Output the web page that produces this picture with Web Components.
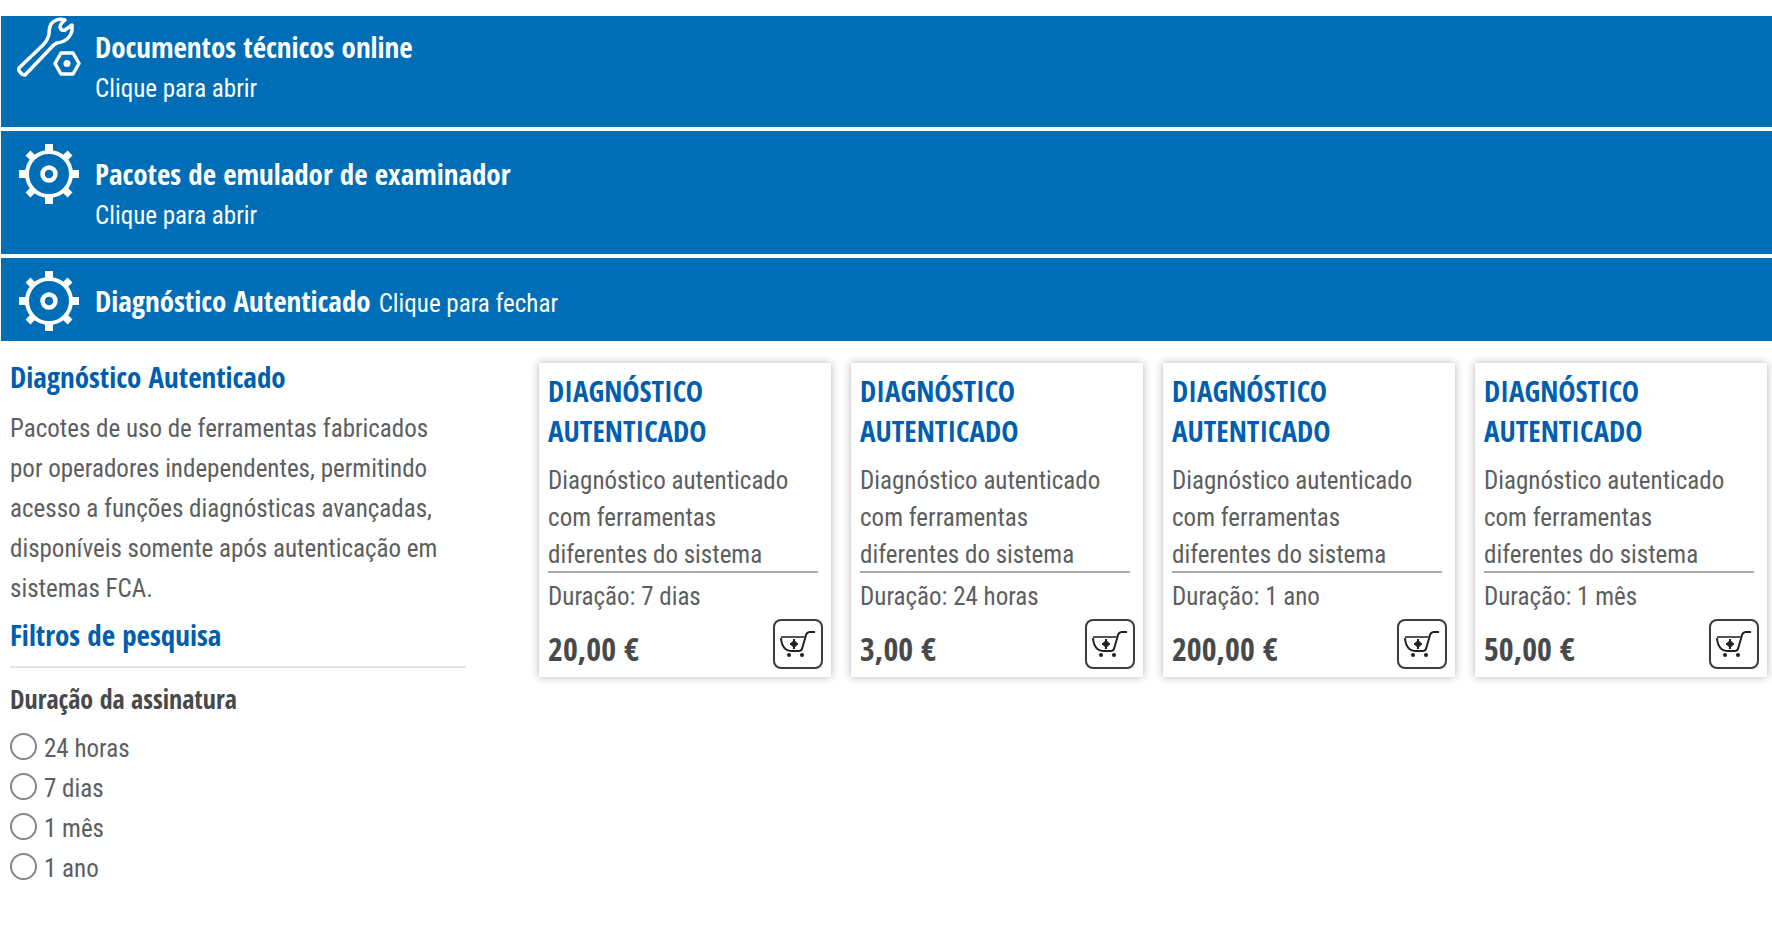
<!DOCTYPE html>
<html lang="pt">
<head>
  <meta charset="UTF-8">
  <meta name="viewport" content="width=device-width, initial-scale=1.0">
  <title>Diagnóstico Autenticado</title>
  <style>
  body {
    --blue: #006eb6;
    --link: #005eae;
    --bold: "Open Sans Condensed", "Roboto Condensed", "Open Sans", sans-serif;
    margin: 0;
    padding-top: 16px;
    background: #fff;
    color: #5c5e60;
    font: 25px/40px "Roboto Condensed", Roboto, sans-serif;
  }
  </style>
</head>
<body>
  <shop-page>
    <accordion-bar slot="bars" icon="wrench" heading="Documentos técnicos online" cropped>Clique para abrir</accordion-bar>
    <accordion-bar slot="bars" icon="gear" heading="Pacotes de emulador de examinador">Clique para abrir</accordion-bar>
    <accordion-bar slot="bars" icon="gear" heading="Diagnóstico Autenticado" open>Clique para fechar</accordion-bar>

    <filter-panel slot="side" heading="Diagnóstico Autenticado" options="24 horas|7 dias|1 mês|1 ano">
      Pacotes de uso de ferramentas fabricados por operadores independentes, permitindo acesso a funções diagnósticas avançadas, disponíveis somente após autenticação em sistemas FCA.
    </filter-panel>

    <product-card heading="Diagnóstico Autenticado" duration="7 dias" price="20,00 €">Diagnóstico autenticado com ferramentas diferentes do sistema</product-card>
    <product-card heading="Diagnóstico Autenticado" duration="24 horas" price="3,00 €">Diagnóstico autenticado com ferramentas diferentes do sistema</product-card>
    <product-card heading="Diagnóstico Autenticado" duration="1 ano" price="200,00 €">Diagnóstico autenticado com ferramentas diferentes do sistema</product-card>
    <product-card heading="Diagnóstico Autenticado" duration="1 mês" price="50,00 €">Diagnóstico autenticado com ferramentas diferentes do sistema</product-card>
  </shop-page>

  <script>
  const RESET = `* { margin: 0; padding: 0; box-sizing: border-box; }`;

  const ICONS = {
    wrench: `
      <svg viewBox="0 0 60 60" fill="none" stroke="#fff" stroke-width="3.5" stroke-linejoin="round" stroke-linecap="round">
        <path d="M0 51 L24 28 Q29 23 30 17 Q30 8 34 5 Q39 1 46 3 Q41 7 41 10 Q42 14 46 13 L53 8 Q54 15 50 20 Q46 25 38 26 Q35 27 30 33 L6 58 Q3 58 1 55 Q-1 53 0 51z"/>
        <path d="M42 36h12l6 10.500-6 10.500H42l-6-10.500z"/>
        <circle cx="48" cy="46.500" r="3.500" fill="#fff" stroke="none"/>
      </svg>`,
    gear: `
      <svg viewBox="0 0 60 60" fill="none" stroke="#fff">
        <circle cx="30" cy="30" r="22" stroke-width="4"/>
        <circle cx="30" cy="30" r="6.500" stroke-width="4.500"/>
        <path stroke-width="8" d="M30 0v8M30 52v8M0 30h8M52 30h8"/>
        <path stroke-width="7" d="M9 9l6 6M45 45l6 6M51 9l-6 6M15 45l-6 6"/>
      </svg>`,
    cart: `
      <svg viewBox="0 0 36 28" fill="none" stroke="#222" stroke-width="2" stroke-linejoin="round">
        <path d="M35 2h-5q-3 0-4 3l-4 14q-1 2-3 2h-7q-10 0-11-13"/>
        <path d="M1 7h24" stroke="#555"/>
        <path d="M14 9v10M10 14h8"/>
        <circle cx="14" cy="14" r="3" fill="#222" stroke="none"/>
        <circle cx="9" cy="25" r="2" fill="#222" stroke="none"/>
        <circle cx="22" cy="25" r="2" fill="#222" stroke="none"/>
      </svg>`
  };

  class ShopPage extends HTMLElement {
    constructor() {
      super();
      this.attachShadow({mode: "open"}).innerHTML = `
    <style>
      ${RESET}
      :host { display: block; }
      .bars {
        display: flex;
        flex-direction: column;
        gap: 4px;
        padding-left: 1px;
      }
      main {
        display: grid;
        grid-template-columns: 26fr 70fr;
        gap: 73px;
        padding: 16px 5px 16px 10px;
      }
      .cards {
        display: grid;
        grid-template-columns: repeat(4, 1fr);
        gap: 20px;
        align-items: start;
        padding-top: 6px;
      }
    </style>
    <div class="bars"><slot name="bars"></slot></div>
    <main>
      <slot name="side"></slot>
      <div class="cards"><slot></slot></div>
    </main>
  `;
    }
  }

  class AccordionBar extends HTMLElement {
    constructor() {
      super();
      this.attachShadow({mode: "open"});
      this.render();
    }

    render() {
      this.shadowRoot.innerHTML = `
    <style>
      ${RESET}
      :host { display: block; }
      button {
        display: flex;
        align-items: flex-start;
        gap: 16px;
        width: 100%;
        padding: 13px 18px 10px;
        border: 0;
        background: var(--blue);
        color: #fff;
        font: inherit;
        text-align: left;
        cursor: pointer;
      }
      :host([cropped]) button { padding-top: 1px; }
      .icon { flex: none; width: 60px; height: 60px; }
      svg { display: block; width: 100%; height: 100%; overflow: visible; }
      .text {
        display: flex;
        flex-direction: column;
        gap: 4px;
        padding: 12px 0 8px;
      }
      :host([open]) .text {
        flex-direction: row;
        align-items: baseline;
        gap: 8px;
        padding-bottom: 6px;
      }
      strong { font: bold 29px/36px var(--bold); }
    </style>
    <button type="button" aria-expanded="${this.hasAttribute('open')}">
      <span class="icon">${ICONS[this.getAttribute('icon')]}</span>
      <span class="text"><strong>${this.getAttribute('heading')}</strong><span><slot></slot></span></span>
    </button>
  `;
    }
  }

  class FilterPanel extends HTMLElement {
    constructor() {
      super();
      this.attachShadow({mode: "open"});
      this.render();
    }

    render() {
      const options = this.getAttribute('options').split('|');
      this.shadowRoot.innerHTML = `
    <style>
      ${RESET}
      :host { display: block; }
      h2 { color: var(--link); font: bold 29px/40px var(--bold); }
      p { padding: 12px 16px 6px 0; }
      fieldset {
        margin-top: 11px;
        padding-top: 11px;
        border: 0;
        border-top: 2px solid #e4e4e4;
      }
      legend { float: left; width: 100%; color: #48494b; font: bold 26px/40px var(--bold); }
      .list { clear: both; padding-top: 10px; }
      label { display: flex; align-items: center; gap: 7px; }
      input {
        appearance: none;
        width: 27px;
        height: 27px;
        margin-bottom: 6px;
        border: 2px solid #858585;
        border-radius: 50%;
        background: #fff;
      }
      input:checked { box-shadow: inset 0 0 0 5px #fff; background: var(--link); }
    </style>
    <h2>${this.getAttribute('heading')}</h2>
    <p><slot></slot></p>
    <h2>Filtros de pesquisa</h2>
    <fieldset>
      <legend>Duração da assinatura</legend>
      <div class="list">
        ${options.map((o, i) => `<label for="d${i}"><input type="radio" name="duration" id="d${i}">${o}</label>`).join('')}
      </div>
    </fieldset>
  `;
    }
  }

  class ProductCard extends HTMLElement {
    constructor() {
      super();
      this.attachShadow({mode: "open"});
      this.render();
    }

    render() {
      this.shadowRoot.innerHTML = `
    <style>
      ${RESET}
      :host {
        display: block;
        padding: 8px 8px 8px 9px;
        background: #fff;
        box-shadow: 0 0 8px rgba(0, 0, 0, .3);
      }
      h3 {
        color: var(--link);
        font: bold 29px/40px var(--bold);
        text-transform: uppercase;
      }
      p { line-height: 37px; }
      .desc {
        height: 111px;
        margin: 11px 5px 5px 0;
        border-bottom: 2px solid #a9a9a9;
      }
      .foot {
        display: flex;
        align-items: flex-end;
        justify-content: space-between;
        margin-top: 4px;
      }
      .foot strong { color: #48494b; font: bold 32px/40px var(--bold); }
      button {
        display: grid;
        place-items: center;
        width: 50px;
        height: 50px;
        border: 2px solid #3c3c3c;
        border-radius: 8px;
        background: #fff;
        cursor: pointer;
      }
      svg { display: block; width: 36px; height: 28px; }
    </style>
    <h3>${this.getAttribute('heading')}</h3>
    <p class="desc"><slot></slot></p>
    <p>Duração: ${this.getAttribute('duration')}</p>
    <div class="foot">
      <strong>${this.getAttribute('price')}</strong>
      <button type="button" aria-label="Adicionar ao carrinho">${ICONS.cart}</button>
    </div>
  `;
    }
  }

  customElements.define('shop-page', ShopPage);
  customElements.define('accordion-bar', AccordionBar);
  customElements.define('filter-panel', FilterPanel);
  customElements.define('product-card', ProductCard);
  </script>
</body>
</html>
